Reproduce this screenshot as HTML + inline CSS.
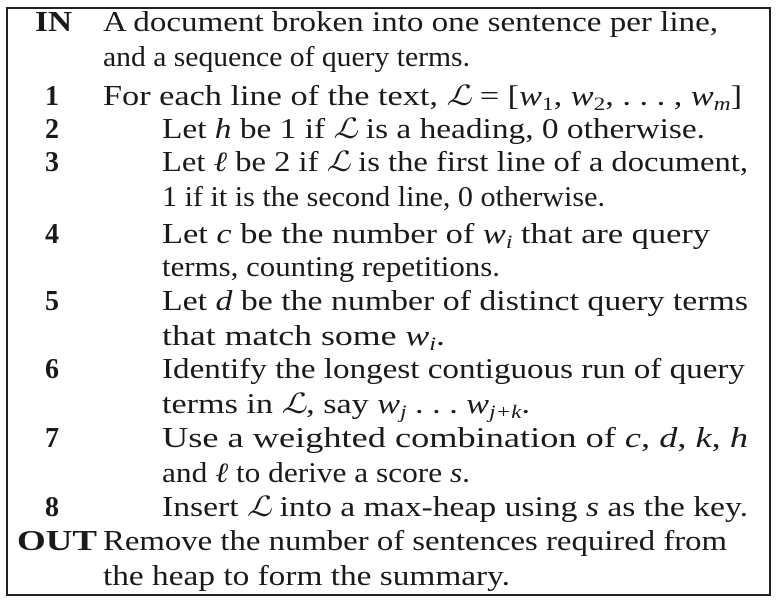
<!DOCTYPE html>
<html><head><meta charset="utf-8"><style>
html,body{margin:0;padding:0;background:#fff;}
svg{display:block}
text{font-family:"Liberation Serif",serif;font-size:28px;fill:#1a1a1a}
.b{font-weight:bold}
.i{font-style:italic}
</style></head><body>
<svg width="776" height="600" xmlns="http://www.w3.org/2000/svg">
<rect x="7" y="8" width="763" height="587" fill="none" stroke="#222" stroke-width="2"/>
<text class="b" x="35" y="31" textLength="37" lengthAdjust="spacingAndGlyphs">IN</text>
<text x="103" y="31" textLength="615" lengthAdjust="spacingAndGlyphs">A document broken into one sentence per line,</text>
<text x="103" y="66" textLength="367" lengthAdjust="spacingAndGlyphs">and a sequence of query terms.</text>
<text class="b" x="45" y="105">1</text>
<text x="103" y="105" textLength="639" lengthAdjust="spacingAndGlyphs">For each line of the text, <tspan class="i">ℒ</tspan> = [<tspan class="i">w</tspan><tspan font-size="19" dy="5">1</tspan><tspan dy="-5">, </tspan><tspan class="i">w</tspan><tspan font-size="19" dy="5">2</tspan><tspan dy="-5">, . . . , </tspan><tspan class="i">w</tspan><tspan class="i" font-size="19" dy="5">m</tspan><tspan dy="-5">]</tspan></text>
<text class="b" x="45" y="138">2</text>
<text x="162" y="138" textLength="543" lengthAdjust="spacingAndGlyphs">Let <tspan class="i">h</tspan> be 1 if <tspan class="i">ℒ</tspan> is a heading, 0 otherwise.</text>
<text class="b" x="45" y="171">3</text>
<text x="162" y="171" textLength="586" lengthAdjust="spacingAndGlyphs">Let <tspan class="i">ℓ</tspan> be 2 if <tspan class="i">ℒ</tspan> is the first line of a document,</text>
<text x="162" y="206" textLength="443" lengthAdjust="spacingAndGlyphs">1 if it is the second line, 0 otherwise.</text>
<text class="b" x="45" y="243">4</text>
<text x="162" y="243" textLength="548" lengthAdjust="spacingAndGlyphs">Let <tspan class="i">c</tspan> be the number of <tspan class="i">w</tspan><tspan class="i" font-size="19" dy="5">i</tspan><tspan dy="-5"> that are query</tspan></text>
<text x="162" y="276" textLength="338" lengthAdjust="spacingAndGlyphs">terms, counting repetitions.</text>
<text class="b" x="45" y="310">5</text>
<text x="162" y="310" textLength="586" lengthAdjust="spacingAndGlyphs">Let <tspan class="i">d</tspan> be the number of distinct query terms</text>
<text x="162" y="345" textLength="283" lengthAdjust="spacingAndGlyphs">that match some <tspan class="i">w</tspan><tspan class="i" font-size="19" dy="5">i</tspan><tspan dy="-5">.</tspan></text>
<text class="b" x="45" y="378">6</text>
<text x="162" y="378" textLength="583" lengthAdjust="spacingAndGlyphs">Identify the longest contiguous run of query</text>
<text x="162" y="413" textLength="368" lengthAdjust="spacingAndGlyphs">terms in <tspan class="i">ℒ</tspan>, say <tspan class="i">w</tspan><tspan class="i" font-size="19" dy="5">j</tspan><tspan dy="-5"> . . . </tspan><tspan class="i">w</tspan><tspan class="i" font-size="19" dy="5">j+k</tspan><tspan dy="-5">.</tspan></text>
<text class="b" x="45" y="447">7</text>
<text x="162" y="447" textLength="586" lengthAdjust="spacingAndGlyphs">Use a weighted combination of <tspan class="i">c</tspan>, <tspan class="i">d</tspan>, <tspan class="i">k</tspan>, <tspan class="i">h</tspan></text>
<text x="162" y="482" textLength="308" lengthAdjust="spacingAndGlyphs">and <tspan class="i">ℓ</tspan> to derive a score <tspan class="i">s</tspan>.</text>
<text class="b" x="45" y="516">8</text>
<text x="162" y="516" textLength="586" lengthAdjust="spacingAndGlyphs">Insert <tspan class="i">ℒ</tspan> into a max-heap using <tspan class="i">s</tspan> as the key.</text>
<text class="b" x="17" y="550" textLength="80" lengthAdjust="spacingAndGlyphs">OUT</text>
<text x="103" y="550" textLength="624" lengthAdjust="spacingAndGlyphs">Remove the number of sentences required from</text>
<text x="103" y="585" textLength="407" lengthAdjust="spacingAndGlyphs">the heap to form the summary.</text>
</svg>
</body></html>
